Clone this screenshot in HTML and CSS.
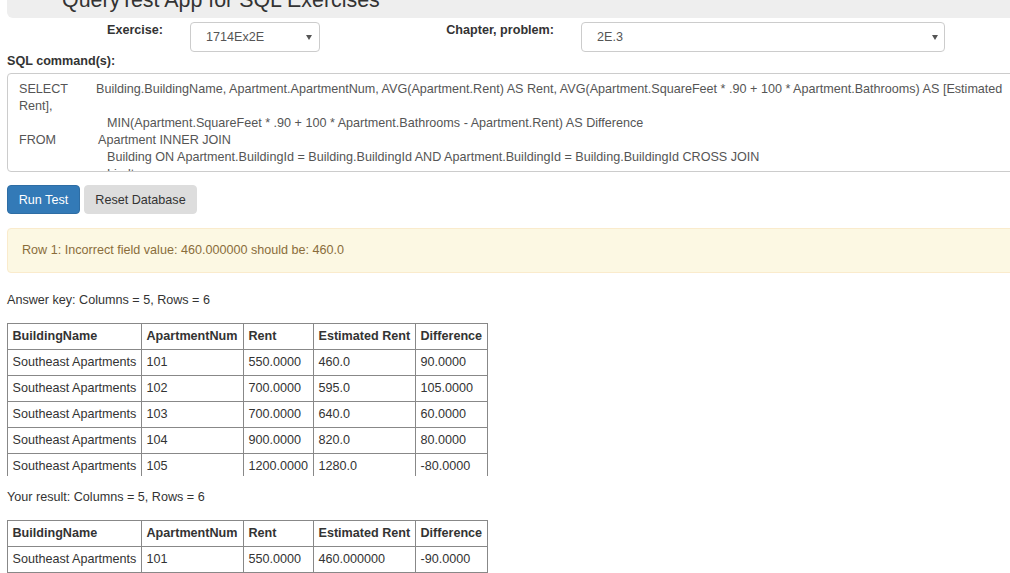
FILE: index.html
```html
<!DOCTYPE html>
<html lang="en">
<head>
<meta charset="utf-8">
<title>QueryTest App for SQL Exercises</title>
<link rel="stylesheet" href="styles.css">
</head>
<body>
<div class="page">
  <div class="jumbo"><h1 class="title">QueryTest App for SQL Exercises</h1></div>

  <div class="pick-row">
    <label class="pick-label ex-label">Exercise:</label>
    <div class="select ex-sel">
      <span class="select-text">1714Ex2E</span>
      <svg class="caret" width="6" height="5" viewBox="0 0 6 5"><polygon points="0,0 6,0 3,5" fill="#555"/></svg>
    </div>
    <label class="pick-label ch-label">Chapter, problem:</label>
    <div class="select ch-sel">
      <span class="select-text">2E.3</span>
      <svg class="caret" width="6" height="5" viewBox="0 0 6 5"><polygon points="0,0 6,0 3,5" fill="#555"/></svg>
    </div>
  </div>

  <div class="sql-label">SQL command(s):</div>
  <div class="sql-box">
    <div class="sql-line"><span class="kw kw-select">SELECT</span>Building.BuildingName, Apartment.ApartmentNum, AVG(Apartment.Rent) AS Rent, AVG(Apartment.SquareFeet * .90 + 100 * Apartment.Bathrooms) AS [Estimated</div>
    <div class="sql-line">Rent],</div>
    <div class="sql-line indent">MIN(Apartment.SquareFeet * .90 + 100 * Apartment.Bathrooms - Apartment.Rent) AS Difference</div>
    <div class="sql-line"><span class="kw kw-from">FROM</span>Apartment INNER JOIN</div>
    <div class="sql-line indent">Building ON Apartment.BuildingId = Building.BuildingId AND Apartment.BuildingId = Building.BuildingId CROSS JOIN</div>
    <div class="sql-line indent">Lindt</div>
  </div>

  <div class="btns">
    <button class="btn btn-run">Run Test</button>
    <button class="btn btn-reset">Reset Database</button>
  </div>

  <div class="alert">Row 1: Incorrect field value: 460.000000 should be: 460.0</div>

  <p class="meta meta-key">Answer key: Columns = 5, Rows = 6</p>
  <div class="clip">
    <table class="grid">
      <tr><th class="c1">BuildingName</th><th class="c2">ApartmentNum</th><th class="c3">Rent</th><th class="c4">Estimated Rent</th><th class="c5">Difference</th></tr>
      <tr><td>Southeast Apartments</td><td>101</td><td>550.0000</td><td>460.0</td><td>90.0000</td></tr>
      <tr><td>Southeast Apartments</td><td>102</td><td>700.0000</td><td>595.0</td><td>105.0000</td></tr>
      <tr><td>Southeast Apartments</td><td>103</td><td>700.0000</td><td>640.0</td><td>60.0000</td></tr>
      <tr><td>Southeast Apartments</td><td>104</td><td>900.0000</td><td>820.0</td><td>80.0000</td></tr>
      <tr><td>Southeast Apartments</td><td>105</td><td>1200.0000</td><td>1280.0</td><td>-80.0000</td></tr>
      <tr><td>Southeast Apartments</td><td>106</td><td>1200.0000</td><td>1300.0</td><td>-100.0000</td></tr>
    </table>
  </div>

  <p class="meta meta-result">Your result: Columns = 5, Rows = 6</p>
  <div class="result">
    <table class="grid">
      <tr><th class="c1">BuildingName</th><th class="c2">ApartmentNum</th><th class="c3">Rent</th><th class="c4">Estimated Rent</th><th class="c5">Difference</th></tr>
      <tr><td>Southeast Apartments</td><td>101</td><td>550.0000</td><td>460.000000</td><td>-90.0000</td></tr>
    </table>
  </div>
</div>
</body>
</html>
```

FILE: styles.css
```css
html, body {
  margin: 0;
  padding: 0;
  overflow: hidden;
  background: #fff;
}

body {
  font-family: "Liberation Sans", Arial, sans-serif;
  font-size: 12.6px;
  line-height: 18px;
  color: #333;
}

.page {
  width: 1040px;
  padding-left: 7px;
}

.jumbo {
  box-sizing: border-box;
  height: 40px;
  margin-top: -22px;
  padding: 10px 0 6px 55px;
  background: #eee;
  border-radius: 6px;
}

.title {
  margin: 0;
  font-size: 21.4px;
  line-height: 24px;
  font-weight: normal;
  color: #333;
}

.pick-row {
  display: flex;
  align-items: flex-start;
  margin-top: 4px;
}

.pick-label {
  font-weight: bold;
  text-align: right;
  margin-top: -1px;
  line-height: 18px;
}

.ex-label { width: 156px; margin-right: 27px; }
.ch-label { width: 234px; margin-right: 27px; }

.select {
  box-sizing: border-box;
  height: 30px;
  border: 1px solid #ccc;
  border-radius: 4px;
  display: flex;
  align-items: center;
  justify-content: space-between;
  padding: 0 7px 0 15px;
  color: #555;
  background: #fff;
}

.ex-sel { width: 130px; }
.ch-sel { width: 364px; padding-right: 6px; }

.caret { display: block; }

.sql-label {
  font-weight: bold;
  line-height: 18px;
}

.sql-box {
  box-sizing: border-box;
  margin-top: 3px;
  height: 99px;
  border: 1px solid #ccc;
  border-radius: 4px;
  padding: 7px 11px 6px;
  overflow: hidden;
  color: #555;
  line-height: 17px;
}

.sql-line {
  white-space: nowrap;
}

.kw { display: inline-block; }
.kw-select { width: 77px; }
.kw-from { width: 79px; }
.indent { padding-left: 88px; }

.btns {
  display: flex;
  gap: 4px;
  margin-top: 13px;
}

.btn {
  box-sizing: border-box;
  height: 29px;
  font-family: inherit;
  font-size: 12.6px;
  line-height: 18px;
  padding: 0;
  text-align: center;
  border: 1px solid transparent;
  border-radius: 4px;
  cursor: pointer;
}

.btn-run {
  width: 73px;
  background: #337ab7;
  border-color: #2e6da4;
  color: #fff;
}

.btn-reset {
  width: 113px;
  background: #dddddd;
  border-color: #dddddd;
  color: #333;
}

.alert {
  margin-top: 14px;
  padding: 12px 14px 13px;
  background: #fcf8e3;
  border: 1px solid #faebcc;
  border-radius: 4px;
  color: #8a6d3b;
}

.meta {
  margin: 0;
  line-height: 18px;
}

.meta-key { margin-top: 18px; }
.meta-result { margin-top: 12px; }

.clip {
  margin-top: 14px;
  height: 153px;
  overflow: hidden;
}

.result { margin-top: 14px; }

.grid {
  border-collapse: collapse;
  white-space: nowrap;
}

.grid th,
.grid td {
  border: 1px solid #888;
  padding: 3px 4.5px 4px;
  line-height: 18px;
  text-align: left;
  color: #333;
}

.grid th { font-weight: bold; }

.grid .c1 { width: 124px; }
.grid .c2 { width: 92px; }
.grid .c3 { width: 60px; }
.grid .c4 { width: 92px; }
.grid .c5 { width: 62px; }
```
